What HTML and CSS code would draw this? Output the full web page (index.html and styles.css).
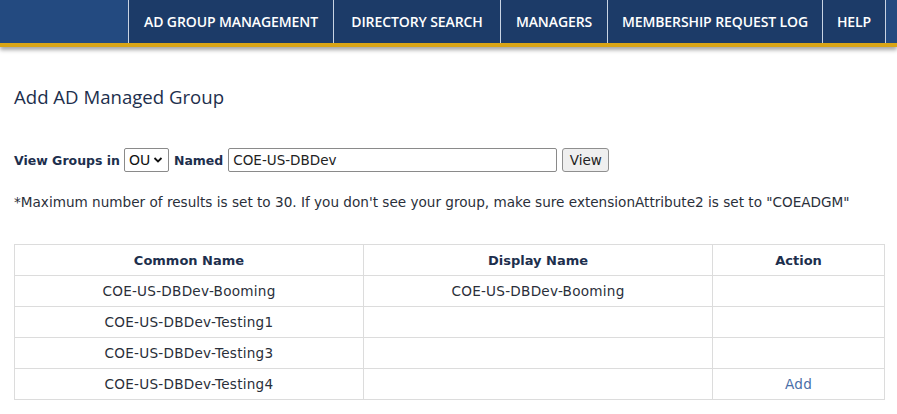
FILE: index.html
```html
<!DOCTYPE html>
<html>
<head>
<meta charset="utf-8">
<link rel="stylesheet" href="styles.css">
</head>
<body>
<header class="topbar">
  <div class="spacer"></div>
  <nav class="nav">
    <a class="nav-item w1">AD GROUP MANAGEMENT</a>
    <a class="nav-item w2">DIRECTORY SEARCH</a>
    <a class="nav-item w3">MANAGERS</a>
    <a class="nav-item w4">MEMBERSHIP REQUEST LOG</a>
    <a class="nav-item w5">HELP</a>
  </nav>
  <div class="spacer-right"></div>
</header>
<main class="content">
  <h1 class="title">Add AD Managed Group</h1>
  <form class="search">
    <label class="lbl">View Groups in</label>
    <div class="select"><span>OU</span><svg width="10" height="8" viewBox="0 0 10 8"><path d="M1.5 2 L5 5.5 L8.5 2" fill="none" stroke="#111" stroke-width="1.8"/></svg></div>
    <label class="lbl">Named</label>
    <input class="text" type="text" value="COE-US-DBDev">
    <button class="btn" type="button">View</button>
  </form>
  <p class="note">*Maximum number of results is set to 30. If you don't see your group, make sure extensionAttribute2 is set to "COEADGM"</p>
  <table class="grid">
    <thead>
      <tr><th class="c1">Common Name</th><th class="c2">Display Name</th><th class="c3">Action</th></tr>
    </thead>
    <tbody>
      <tr><td>COE-US-DBDev-Booming</td><td>COE-US-DBDev-Booming</td><td></td></tr>
      <tr><td>COE-US-DBDev-Testing1</td><td></td><td></td></tr>
      <tr><td>COE-US-DBDev-Testing3</td><td></td><td></td></tr>
      <tr><td>COE-US-DBDev-Testing4</td><td></td><td><a class="add">Add</a></td></tr>
    </tbody>
  </table>
</main>
</body>
</html>
```
FILE: styles.css
```css
html, body { margin: 0; padding: 0; background: #fff; }
body { font-family: "DejaVu Sans", Verdana, sans-serif; color: #222; }
.topbar {
  display: flex;
  height: 43px;
  background: #234a80;
  border-bottom: 4px solid #d9a516;
  box-shadow: 0 3px 4px rgba(0,0,0,0.35);
}
.spacer { width: 128px; border-right: 1px solid #c8d3e3; }
.spacer-right { flex: 1; }
.nav { display: flex; }
.nav-item {
  display: flex;
  align-items: center;
  justify-content: center;
  box-sizing: border-box;
  background: #1c3b68;
  color: #fff;
  font-family: "Open Sans", sans-serif;
  font-weight: 600;
  font-size: 14px;
  border-right: 1px solid #c8d3e3;
  text-decoration: none;
  letter-spacing: -0.1px;
  white-space: nowrap;
}
.w1 { width: 205px; }
.w2 { width: 167px; }
.w3 { width: 107px; }
.w4 { width: 215px; }
.w5 { width: 63px; }
.content { padding: 0 14px; }
.title {
  margin: 38px 0 0 0;
  font-family: "Open Sans", sans-serif;
  font-weight: 400;
  font-size: 18.6px;
  line-height: 24px;
  color: #1d2f4d;
}
.search {
  display: flex;
  align-items: center;
  margin-top: 38px;
  height: 26px;
  font-size: 12.5px;
}
.lbl { font-weight: bold; color: #1d2f4d; font-family: "DejaVu Sans", sans-serif; }
.select {
  display: flex;
  align-items: center;
  gap: 3px;
  box-sizing: border-box;
  height: 24px;
  width: 45px;
  margin: 0 5px 0 4px;
  padding: 0 4px;
  border: 1px solid #8a8a8a;
  border-radius: 2px;
  font-size: 14px;
  color: #111;
}
.text {
  box-sizing: border-box;
  width: 329px;
  height: 24px;
  margin-left: 5px;
  padding: 0 4px;
  border: 1px solid #8a8a8a;
  border-radius: 2px;
  font-family: "DejaVu Sans", sans-serif;
  font-size: 13.5px;
  color: #222;
}
.btn {
  box-sizing: border-box;
  height: 24px;
  width: 47px;
  margin-left: 5px;
  background: #efefef;
  border: 1px solid #8f8f8f;
  border-radius: 3px;
  font-family: "DejaVu Sans", sans-serif;
  font-size: 13.5px;
  color: #222;
  padding: 0;
}
.note {
  margin: 20px 0 0 0;
  font-size: 13.6px;
  line-height: 18px;
  color: #2a2f3a;
}
.grid {
  margin-top: 33px;
  width: 871px;
  border-collapse: collapse;
  font-size: 13.6px;
}
.grid th, .grid td {
  border: 1px solid #dcdcdc;
  height: 30px;
  padding: 0;
  text-align: center;
  color: #2a2f3a;
}
.grid td { letter-spacing: 0.25px; }
.grid th { font-weight: bold; color: #1d2f4d; font-size: 13px; }
.c1 { width: 348px; }
.c2 { width: 348px; }
.add { color: #4a6ea8; text-decoration: none; }
```
